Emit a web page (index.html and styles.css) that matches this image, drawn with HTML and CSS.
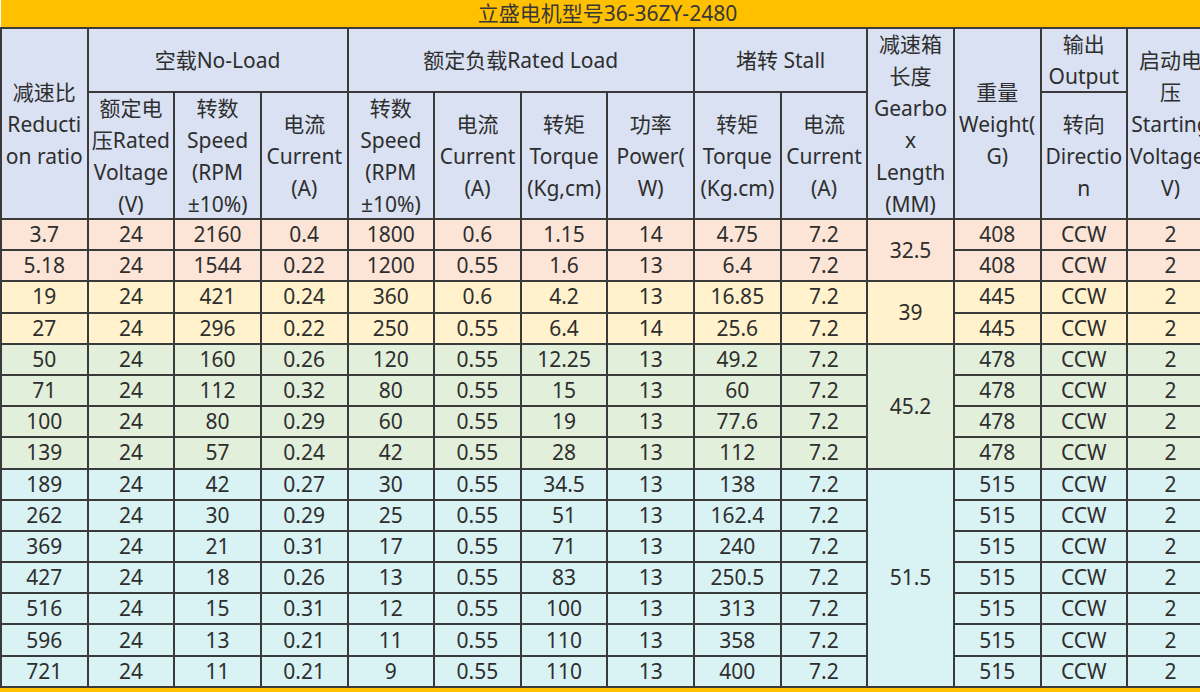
FILE: index.html
```html
<!DOCTYPE html>
<html lang="zh">
<head>
<meta charset="utf-8">
<title>立盛电机型号36-36ZY-2480</title>
<link rel="stylesheet" href="styles.css">
</head>
<body>
<table class="spec">
  <colgroup>
    <col><col><col><col><col><col><col><col><col><col><col><col><col><col>
  </colgroup>
  <thead>
    <tr class="title-row"><th colspan="14" class="title">立盛电机型号36-36ZY-2480</th></tr>
    <tr class="h1">
      <th rowspan="2"><div class="stack tall-stack">减速比<br>Reducti<br>on ratio</div></th>
      <th colspan="3">空载No-Load</th>
      <th colspan="4">额定负载Rated Load</th>
      <th colspan="2">堵转 Stall</th>
      <th rowspan="2"><div class="stack tall-stack">减速箱<br>长度<br>Gearbo<br>x<br>Length<br>(MM)</div></th>
      <th rowspan="2"><div class="stack tall-stack">重量<br>Weight(<br>G)</div></th>
      <th><div class="stack short-stack">输出<br>Output</div></th>
      <th rowspan="2"><div class="stack tall-stack">启动电<br>压<br>Starting<br>Voltage(<br>V)</div></th>
    </tr>
    <tr class="h2">
      <th><div class="stack">额定电<br>压Rated<br>Voltage<br>(V)</div></th>
      <th><div class="stack">转数<br>Speed<br>(RPM<br>±10%)</div></th>
      <th><div class="stack">电流<br>Current<br>(A)</div></th>
      <th><div class="stack">转数<br>Speed<br>(RPM<br>±10%)</div></th>
      <th><div class="stack">电流<br>Current<br>(A)</div></th>
      <th><div class="stack">转矩<br>Torque<br>(Kg,cm)</div></th>
      <th><div class="stack">功率<br>Power(<br>W)</div></th>
      <th><div class="stack">转矩<br>Torque<br>(Kg.cm)</div></th>
      <th><div class="stack">电流<br>Current<br>(A)</div></th>
      <th><div class="stack">转向<br>Directio<br>n</div></th>
    </tr>
  </thead>
  <tbody>
    <tr class="pink"><td>3.7</td><td>24</td><td>2160</td><td>0.4</td><td>1800</td><td>0.6</td><td>1.15</td><td>14</td><td>4.75</td><td>7.2</td><td rowspan="2">32.5</td><td>408</td><td>CCW</td><td>2</td></tr>
    <tr class="pink"><td>5.18</td><td>24</td><td>1544</td><td>0.22</td><td>1200</td><td>0.55</td><td>1.6</td><td>13</td><td>6.4</td><td>7.2</td><td>408</td><td>CCW</td><td>2</td></tr>
    <tr class="yellow"><td>19</td><td>24</td><td>421</td><td>0.24</td><td>360</td><td>0.6</td><td>4.2</td><td>13</td><td>16.85</td><td>7.2</td><td rowspan="2">39</td><td>445</td><td>CCW</td><td>2</td></tr>
    <tr class="yellow"><td>27</td><td>24</td><td>296</td><td>0.22</td><td>250</td><td>0.55</td><td>6.4</td><td>14</td><td>25.6</td><td>7.2</td><td>445</td><td>CCW</td><td>2</td></tr>
    <tr class="green"><td>50</td><td>24</td><td>160</td><td>0.26</td><td>120</td><td>0.55</td><td>12.25</td><td>13</td><td>49.2</td><td>7.2</td><td rowspan="4">45.2</td><td>478</td><td>CCW</td><td>2</td></tr>
    <tr class="green"><td>71</td><td>24</td><td>112</td><td>0.32</td><td>80</td><td>0.55</td><td>15</td><td>13</td><td>60</td><td>7.2</td><td>478</td><td>CCW</td><td>2</td></tr>
    <tr class="green"><td>100</td><td>24</td><td>80</td><td>0.29</td><td>60</td><td>0.55</td><td>19</td><td>13</td><td>77.6</td><td>7.2</td><td>478</td><td>CCW</td><td>2</td></tr>
    <tr class="green"><td>139</td><td>24</td><td>57</td><td>0.24</td><td>42</td><td>0.55</td><td>28</td><td>13</td><td>112</td><td>7.2</td><td>478</td><td>CCW</td><td>2</td></tr>
    <tr class="cyan"><td>189</td><td>24</td><td>42</td><td>0.27</td><td>30</td><td>0.55</td><td>34.5</td><td>13</td><td>138</td><td>7.2</td><td rowspan="7">51.5</td><td>515</td><td>CCW</td><td>2</td></tr>
    <tr class="cyan"><td>262</td><td>24</td><td>30</td><td>0.29</td><td>25</td><td>0.55</td><td>51</td><td>13</td><td>162.4</td><td>7.2</td><td>515</td><td>CCW</td><td>2</td></tr>
    <tr class="cyan"><td>369</td><td>24</td><td>21</td><td>0.31</td><td>17</td><td>0.55</td><td>71</td><td>13</td><td>240</td><td>7.2</td><td>515</td><td>CCW</td><td>2</td></tr>
    <tr class="cyan"><td>427</td><td>24</td><td>18</td><td>0.26</td><td>13</td><td>0.55</td><td>83</td><td>13</td><td>250.5</td><td>7.2</td><td>515</td><td>CCW</td><td>2</td></tr>
    <tr class="cyan"><td>516</td><td>24</td><td>15</td><td>0.31</td><td>12</td><td>0.55</td><td>100</td><td>13</td><td>313</td><td>7.2</td><td>515</td><td>CCW</td><td>2</td></tr>
    <tr class="cyan"><td>596</td><td>24</td><td>13</td><td>0.21</td><td>11</td><td>0.55</td><td>110</td><td>13</td><td>358</td><td>7.2</td><td>515</td><td>CCW</td><td>2</td></tr>
    <tr class="cyan"><td>721</td><td>24</td><td>11</td><td>0.21</td><td>9</td><td>0.55</td><td>110</td><td>13</td><td>400</td><td>7.2</td><td>515</td><td>CCW</td><td>2</td></tr>
  </tbody>
</table>
<div class="footer-bar"></div>
</body>
</html>
```

FILE: styles.css
```css
html, body {
  margin: 0;
  padding: 0;
  background: #ffffff;
  overflow: hidden;
}

.spec {
  border-collapse: collapse;
  table-layout: fixed;
  width: 1213px;
  font-family: "Noto Sans", "Noto Sans CJK SC", sans-serif;
  font-size: 21px;
  color: #2e2e2e;
}

.spec col {
  width: 86.64px;
}

.spec th,
.spec td {
  border: 2px solid #3a3a3a;
  padding: 0;
  text-align: center;
  vertical-align: middle;
  font-weight: normal;
  white-space: nowrap;
  overflow: hidden;
}

.spec .title {
  background: #ffc000;
  border-top: none;
  border-left: none;
  border-right: none;
  height: 27px;
  line-height: 27px;
  font-size: 21px;
  color: #383838;
}

.spec thead th {
  background: #d9e1f2;
  line-height: 32px;
}

.spec .h1 th {
  height: 62px;
}

.spec .h2 th {
  height: 125px;
}

.stack {
  height: 121px;
  display: flex;
  flex-direction: column;
  justify-content: center;
  line-height: 32px;
  overflow: visible;
}

.short-stack {
  height: 61px;
}

.tall-stack {
  height: 186px;
}

.spec tbody td {
  height: 29.2px;
  line-height: 29px;
}

.spec .pink td { background: #fce4d6; }
.spec .yellow td { background: #fff2cc; }
.spec .green td { background: #e2efda; }
.spec .cyan td { background: #d9f2f4; }

.footer-bar {
  height: 12px;
  background: #ffc000;
}
```
